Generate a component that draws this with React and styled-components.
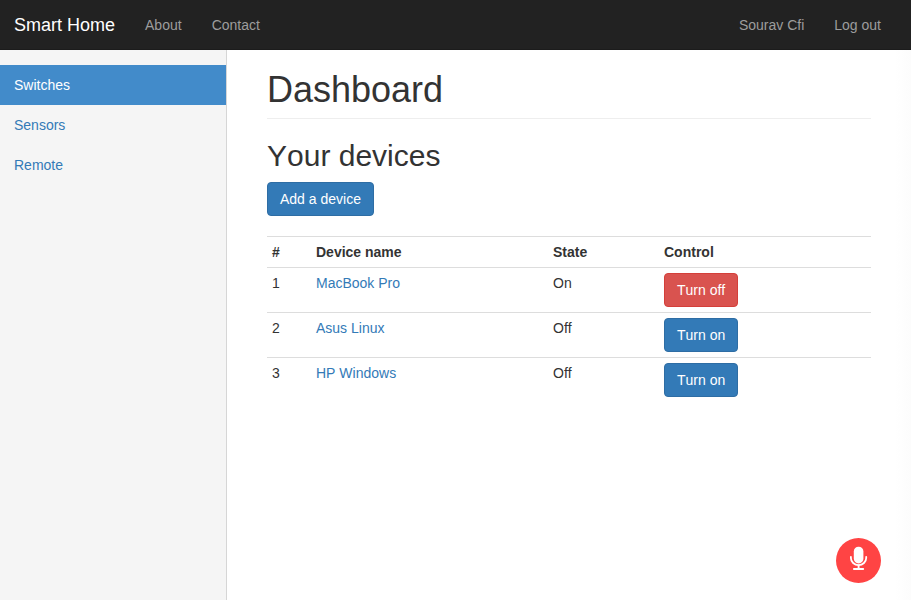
import React from "react";
import styled, { createGlobalStyle } from "styled-components";

const GlobalStyle = createGlobalStyle`
  *, *::before, *::after { box-sizing: border-box; }
  body {
    margin: 0;
    font-family: "Liberation Sans", Arial, sans-serif;
    font-size: 14px;
    line-height: 20px;
    font-kerning: none;
    color: #333;
    background: #fff;
  }
  a { text-decoration: none; }
`;

const Page = styled.div`
  height: 100vh;
  display: flex;
  flex-direction: column;
  overflow: hidden;
`;

const Navbar = styled.nav`
  flex: none;
  display: flex;
  height: 50px;
  background: #222;
  border-bottom: 1px solid #1c1c1c;
  padding-right: 15px;
`;

const Brand = styled.a`
  padding: 15px 15px 14px 14px;
  font-size: 18px;
  color: #fff;
`;

const NavLink = styled.a`
  padding: 15px 15px 14px;
  color: #9d9d9d;
`;

const NavGroup = styled.div`
  display: flex;
  margin-left: ${(p) => (p.$end ? "auto" : "0")};
`;

const Body = styled.div`
  flex: 1;
  display: flex;
  min-height: 0;
`;

const Sidebar = styled.aside`
  flex: none;
  width: 227px;
  padding-top: 15px;
  background: #f5f5f5;
  border-right: 1px solid #d6d6d6;
`;

const SideLink = styled.a`
  display: block;
  padding: 10px 14px;
  color: ${(p) => (p.$active ? "#fff" : "#337ab7")};
  background: ${(p) => (p.$active ? "#428bca" : "transparent")};
`;

const Main = styled.main`
  flex: 1;
  padding: 20px 40px 0;
  background: linear-gradient(to left, #fcfcfc, #fff 16px);
`;

const PageTitle = styled.h1`
  margin: 0 0 20px;
  padding-bottom: 9px;
  font-size: 36px;
  font-weight: 500;
  line-height: 39px;
  border-bottom: 1px solid #eee;
`;

const SectionTitle = styled.h2`
  margin: 0 0 10px;
  font-size: 30px;
  font-weight: 500;
  line-height: 33px;
`;

const Button = styled.button`
  display: inline-block;
  height: 34px;
  padding: 6px 12px;
  font: inherit;
  font-kerning: none;
  color: #fff;
  border: 1px solid ${(p) => (p.$danger ? "#d43f3a" : "#2e6da4")};
  border-radius: 4px;
  background: ${(p) => (p.$danger ? "#d9534f" : "#337ab7")};
`;

const Table = styled.div`
  margin-top: 20px;
`;

const Row = styled.div`
  display: grid;
  grid-template-columns: 44px 237px 111px 1fr;
  border-top: 1px solid #ddd;
  font-weight: ${(p) => (p.$head ? "bold" : "normal")};
`;

const Cell = styled.div`
  padding: 5px;
`;

const DeviceLink = styled.a`
  color: #337ab7;
`;

const MicButton = styled.button`
  position: fixed;
  right: 30px;
  bottom: 17px;
  width: 45px;
  height: 45px;
  padding: 0;
  display: flex;
  align-items: center;
  justify-content: center;
  border: 0;
  border-radius: 50%;
  background: #ff4444;
`;

const devices = [
  { name: "MacBook Pro", on: true },
  { name: "Asus Linux", on: false },
  { name: "HP Windows", on: false },
];

function MicIcon() {
  return (
    <svg width="45" height="45" viewBox="0 0 45 45" fill="none" stroke="#fff" strokeLinecap="round">
      <rect x="17.8" y="8.7" width="9.6" height="16.7" rx="4.7" fill="#fff" stroke="none" />
      <path d="M14.9 18.8v1.1a7.65 7.2 0 0 0 15.3 0v-1.1" strokeWidth="1.8" />
      <path d="M22.6 27.5v3.2M17.9 31h9.3" strokeWidth="1.9" />
    </svg>
  );
}

export default function App() {
  return (
    <Page>
      <GlobalStyle />
      <Navbar>
        <Brand href="#">Smart Home</Brand>
        <NavGroup>
          <NavLink href="#">About</NavLink>
          <NavLink href="#">Contact</NavLink>
        </NavGroup>
        <NavGroup $end>
          <NavLink href="#">Sourav Cfi</NavLink>
          <NavLink href="#">Log out</NavLink>
        </NavGroup>
      </Navbar>
      <Body>
        <Sidebar>
          <SideLink href="#" $active>Switches</SideLink>
          <SideLink href="#">Sensors</SideLink>
          <SideLink href="#">Remote</SideLink>
        </Sidebar>
        <Main>
          <PageTitle>Dashboard</PageTitle>
          <SectionTitle>Your devices</SectionTitle>
          <Button>Add a device</Button>
          <Table>
            <Row $head>
              <Cell>#</Cell>
              <Cell>Device name</Cell>
              <Cell>State</Cell>
              <Cell>Control</Cell>
            </Row>
            {devices.map((device, i) => (
              <Row key={device.name}>
                <Cell>{i + 1}</Cell>
                <Cell><DeviceLink href="#">{device.name}</DeviceLink></Cell>
                <Cell>{device.on ? "On" : "Off"}</Cell>
                <Cell>
                  <Button $danger={device.on}>{device.on ? "Turn off" : "Turn on"}</Button>
                </Cell>
              </Row>
            ))}
          </Table>
        </Main>
      </Body>
      <MicButton aria-label="Voice control"><MicIcon /></MicButton>
    </Page>
  );
}
